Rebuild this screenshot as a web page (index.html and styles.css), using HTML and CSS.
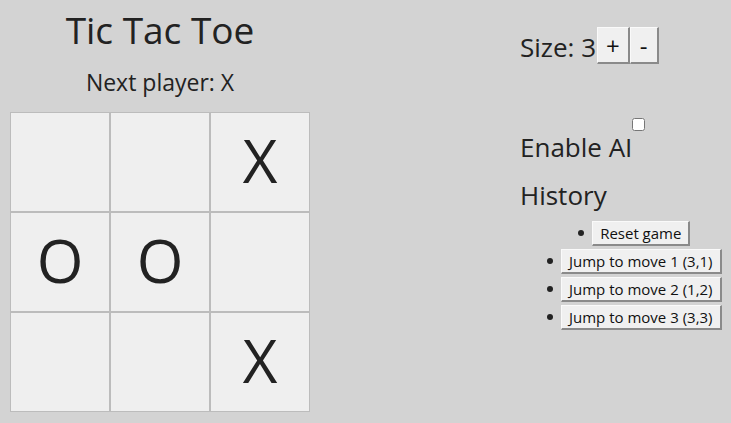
FILE: index.html
```html
<!DOCTYPE html>
<html lang="en">
<head>
    <meta charset="UTF-8">
    <meta name="viewport" content="width=device-width, initial-scale=1.0">
    <title>Tic Tac Toe</title>
    <link rel="stylesheet" href="styles.css">
</head>
<body>
    <div class="app">
        <div class="game">
            <div class="title">Tic Tac Toe</div>
            <div class="status">Next player: X</div>
            <div class="board">
                <button class="cell"></button>
                <button class="cell"></button>
                <button class="cell">X</button>
                <button class="cell">O</button>
                <button class="cell">O</button>
                <button class="cell"></button>
                <button class="cell"></button>
                <button class="cell"></button>
                <button class="cell">X</button>
            </div>
        </div>
        <div class="controls">
            <div class="size-row">
                <span class="size-label">Size: 3</span>
                <button class="btn size-btn">+</button><button class="btn size-btn">-</button>
            </div>
            <label class="ai-row">Enable AI<input type="checkbox" class="ai-check"></label>
            <div class="history-title">History</div>
            <ul class="history">
                <li><button class="btn move-btn">Reset game</button></li>
                <li><button class="btn move-btn">Jump to move 1 (3,1)</button></li>
                <li><button class="btn move-btn">Jump to move 2 (1,2)</button></li>
                <li><button class="btn move-btn">Jump to move 3 (3,3)</button></li>
            </ul>
        </div>
    </div>
</body>
</html>
```

FILE: styles.css
```css
body {
    margin: 0;
    padding: 0;
    background-color: #d3d3d3;
    font-family: "Open Sans", "Noto Sans", sans-serif;
    color: #222;
}
.app {
    display: flex;
    align-items: flex-start;
    padding: 0 0 0 10px;
}
.game {
    width: 300px;
    flex-shrink: 0;
    text-align: center;
}
.title {
    font-size: 37px;
    line-height: 48px;
    margin-top: 6px;
}
.status {
    font-size: 23px;
    line-height: 30px;
    margin-top: 13px;
}
.board {
    display: grid;
    grid-template-columns: repeat(3, 100px);
    grid-template-rows: repeat(3, 100px);
    margin-top: 15px;
}
.cell {
    margin: 0;
    padding: 0 0 4px 0;
    background-color: #efefef;
    border: 1px solid #bcbcbc;
    font-family: inherit;
    font-size: 60px;
    line-height: 60px;
    color: #222;
}
.controls {
    flex-shrink: 0;
    margin-left: 210px;
    margin-top: 27px;
}
.size-row {
    display: flex;
    align-items: flex-end;
    height: 37px;
}
.size-label {
    font-size: 26px;
    line-height: 34px;
}
.btn {
    margin: 0;
    background-color: #f0f0f0;
    border-style: solid;
    border-width: 1px 2px 2px 1px;
    border-color: #fafafa #8a8a8a #8a8a8a #fafafa;
    font-family: inherit;
    color: #111;
    white-space: nowrap;
}
.size-btn {
    font-size: 24px;
    height: 37px;
    padding: 0 9px;
}
.size-btn:first-of-type {
    margin-left: 1px;
    padding: 0 8px;
}
.ai-row {
    display: block;
    margin-top: 64px;
    font-size: 26px;
    line-height: 38px;
}
.ai-check {
    width: 13px;
    height: 13px;
    margin: -10px 0 0 0;
    vertical-align: top;
}
.history-title {
    font-size: 26px;
    line-height: 38px;
    margin-top: 10px;
}
.history {
    margin: 5px 0 0 0;
    padding-left: 27px;
    list-style: none;
}
.history li {
    display: flex;
    justify-content: center;
    align-items: center;
    height: 28px;
}
.history li::before {
    content: "";
    width: 6px;
    height: 6px;
    border-radius: 50%;
    background-color: #222;
    margin-right: 8px;
}
.move-btn {
    font-size: 15px;
    height: 25px;
    padding: 0 7px;
}
```
